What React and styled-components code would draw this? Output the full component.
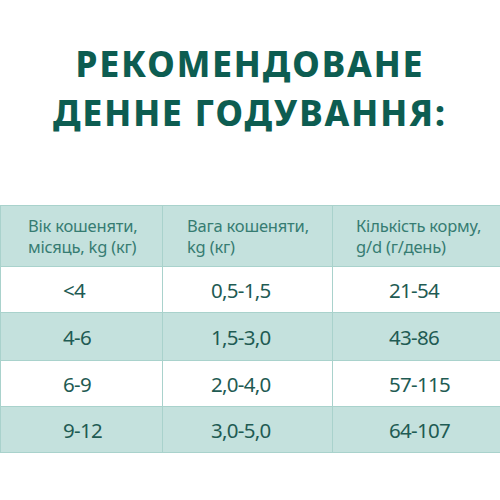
import React from 'react';
import styled, { createGlobalStyle } from 'styled-components';

const GlobalStyle = createGlobalStyle`
    html, body {
        margin: 0;
        padding: 0;
        background: #ffffff;
    }
`;

const Page = styled.div`
    width: 500px;
    height: 500px;
    display: flex;
    flex-direction: column;
    background: #ffffff;
    overflow: hidden;
`;

const Title = styled.h1`
    margin: 0;
    padding-top: 39px;
    height: 205px;
    flex-shrink: 0;
    box-sizing: border-box;
    font-family: "Noto Sans", sans-serif;
    font-weight: 800;
    font-size: 35px;
    line-height: 49px;
    letter-spacing: 2px;
    color: #0d5d51;
    text-align: center;
    text-transform: uppercase;
`;

const Table = styled.table`
    width: 500px;
    border-collapse: collapse;
    table-layout: fixed;
    font-family: "Noto Sans", sans-serif;
`;

const Row = styled.tr`
    background: ${p => (p.$shaded ? '#c4e1dd' : '#ffffff')};
    height: ${p => p.$height}px;
`;

const HeadCell = styled.th`
    border: 1.5px solid #a9d2cc;
    padding: 0 0 0 ${p => p.$pad}px;
    text-align: left;
    vertical-align: middle;
    font-weight: 400;
    font-size: 16.5px;
    line-height: 21px;
    letter-spacing: -0.2px;
    color: #367c72;
`;

const Cell = styled.td`
    border: 1.5px solid #a9d2cc;
    padding: 0 0 0 ${p => p.$pad}px;
    text-align: left;
    vertical-align: middle;
    font-size: 20.5px;
    letter-spacing: -0.7px;
    color: #1f5b53;
`;

const rows = [
    ['<4', '0,5-1,5', '21-54'],
    ['4-6', '1,5-3,0', '43-86'],
    ['6-9', '2,0-4,0', '57-115'],
    ['9-12', '3,0-5,0', '64-107'],
];

const bodyPads = [62, 48, 56];

const App = () => {
    return (
        <Page>
            <GlobalStyle />
            <Title>
                Рекомендоване<br />денне годування:
            </Title>
            <Table>
                <colgroup>
                    <col style={{ width: 162 }} />
                    <col style={{ width: 170 }} />
                    <col style={{ width: 168 }} />
                </colgroup>
                <thead>
                    <Row $shaded $height={61}>
                        <HeadCell $pad={27}>Вік кошеняти,<br />місяць, kg (кг)</HeadCell>
                        <HeadCell $pad={24}>Вага кошеняти,<br />kg (кг)</HeadCell>
                        <HeadCell $pad={23}>Кількість корму,<br />g/d (г/день)</HeadCell>
                    </Row>
                </thead>
                <tbody>
                    {rows.map((r, i) => (
                        <Row key={i} $shaded={i % 2 === 1} $height={i === 1 ? 48 : 46}>
                            {r.map((v, j) => (
                                <Cell key={j} $pad={bodyPads[j]}>{v}</Cell>
                            ))}
                        </Row>
                    ))}
                </tbody>
            </Table>
        </Page>
    );
};

export default App;
